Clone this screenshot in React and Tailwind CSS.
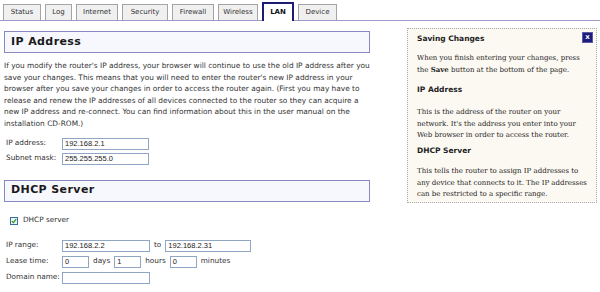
import React from "react";

const sans = { fontFamily: '"DejaVu Sans", Verdana, sans-serif' };
const serif = { fontFamily: '"DejaVu Serif", Georgia, serif' };

function Tab({ label, w, active }) {
  if (active) {
    return (
      <div
        className={`${w} h-[19px] mb-[-1px] bg-white border-2 border-b-0 border-[#1c1c72] flex items-center justify-center text-[7px] font-bold text-[#111]`}
      >
        {label}
      </div>
    );
  }
  return (
    <div
      className={`${w} h-[16px] bg-[#f0f0f0] border border-[#a4a4a4] border-b-0 flex items-center justify-center text-[7px] text-[#333]`}
    >
      {label}
    </div>
  );
}

function Heading({ children }) {
  return (
    <div className="h-[22px] border border-[#8a88c0] bg-[#f7f7fe] flex items-center pl-[6px] text-[11px] font-bold tracking-[0.4px] text-[#1a1a1a]">
      {children}
    </div>
  );
}

function Input({ value, w }) {
  return (
    <div
      className={`${w} h-[12px] border border-[#8fa6c4] bg-white flex items-center pl-[2px] text-[7.5px] text-[#222] leading-none`}
      style={{ fontFamily: '"Liberation Sans", Arial, sans-serif' }}
    >
      {value}
    </div>
  );
}

function Row({ label, children }) {
  return (
    <div className="flex items-center h-[12px] text-[7.3px] text-[#333]">
      <div className="w-[58px] pl-[2px] whitespace-nowrap">{label}</div>
      {children}
    </div>
  );
}

export default function App() {
  return (
    <div className="w-[600px] h-[292px] bg-white overflow-hidden" style={sans}>
      {/* Tabs */}
      <div className="h-[21px] flex items-end gap-[4px] pl-[3px] border-b border-[#9c9ac8]">
        <Tab label="Status" w="w-[38px]" />
        <Tab label="Log" w="w-[27px]" />
        <Tab label="Internet" w="w-[42px]" />
        <Tab label="Security" w="w-[46px]" />
        <Tab label="Firewall" w="w-[42px]" />
        <Tab label="Wireless" w="w-[40px]" />
        <Tab label="LAN" w="w-[32px]" active />
        <Tab label="Device" w="w-[39px]" />
      </div>

      <div className="flex items-start">
        {/* Main */}
        <div className="ml-[4px] w-[366px] pt-[10px]">
          <Heading>IP Address</Heading>
          <p className="mt-[7px] text-[7.4px] leading-[11.6px] text-[#333] whitespace-nowrap">
            If you modify the router's IP address, your browser will continue to use the old IP address after you
            <br />
            save your changes. This means that you will need to enter the router's new IP address in your
            <br />
            browser after you save your changes in order to access the router again. (First you may have to
            <br />
            release and renew the IP addresses of all devices connected to the router so they can acquire a
            <br />
            new IP address and re-connect. You can find information about this in the user manual on the
            <br />
            installation CD-ROM.)
          </p>

          <div className="mt-[8px] flex flex-col gap-[3px]">
            <Row label="IP address:">
              <Input value="192.168.2.1" w="w-[87px]" />
            </Row>
            <Row label="Subnet mask:">
              <Input value="255.255.255.0" w="w-[87px]" />
            </Row>
          </div>

          <div className="mt-[15px]">
            <Heading>DHCP Server</Heading>
          </div>

          <div className="mt-[13px] flex items-center h-[12px] pl-[6px] text-[7.3px] text-[#333]">
            <span className="w-[8px] h-[8px] border border-[#3c6e9c] bg-[#eef4ee] flex items-center justify-center">
              <svg width="6" height="6" viewBox="0 0 6 6">
                <path d="M0.8 3.1 L2.4 4.6 L5.2 1.2" fill="none" stroke="#1f9a2a" strokeWidth="1.3" />
              </svg>
            </span>
            <span className="ml-[5px]">DHCP server</span>
          </div>

          <div className="mt-[13px] flex flex-col gap-[4px]">
            <Row label="IP range:">
              <Input value="192.168.2.2" w="w-[88px]" />
              <span className="ml-[4px] mr-[4px]">to</span>
              <Input value="192.168.2.31" w="w-[86px]" />
            </Row>
            <Row label="Lease time:">
              <Input value="0" w="w-[27px]" />
              <span className="ml-[4px] mr-[4px]">days</span>
              <Input value="1" w="w-[27px]" />
              <span className="ml-[4px] mr-[4px]">hours</span>
              <Input value="0" w="w-[27px]" />
              <span className="ml-[4px]">minutes</span>
            </Row>
            <Row label="Domain name:">
              <Input value="" w="w-[88px]" />
            </Row>
          </div>
        </div>

        {/* Sidebar */}
        <div className="self-start ml-[37px] mt-[7px] w-[190px] border border-dotted border-[#a8a8a8] bg-[#fcf9f2] pl-[9px] pr-[3px] pt-[3px] pb-[1px] text-[#222]">
          <div className="flex items-start justify-between">
            <div className="text-[7.5px] font-bold leading-[11.5px] mt-[1px]">Saving Changes</div>
            <div className="w-[11px] h-[11px] bg-[#1c1c7c] border border-[#5a5aa8] flex items-center justify-center text-white text-[7px] font-bold leading-none">
              x
            </div>
          </div>
          <p className="mt-[8px] text-[7px] leading-[11.5px] whitespace-nowrap" style={serif}>
            When you finish entering your changes, press
            <br />
            the <b>Save</b> button at the bottom of the page.
          </p>
          <div className="mt-[7px] text-[7.5px] font-bold leading-[11.5px]">IP Address</div>
          <p className="mt-[12px] text-[7px] leading-[11.5px] whitespace-nowrap" style={serif}>
            This is the address of the router on your
            <br />
            network. It's the address you enter into your
            <br />
            Web browser in order to access the router.
          </p>
          <div className="mt-[3px] text-[7.5px] font-bold leading-[11.5px]">DHCP Server</div>
          <p className="mt-[10px] text-[7px] leading-[11.5px] whitespace-nowrap" style={serif}>
            This tells the router to assign IP addresses to
            <br />
            any device that connects to it. The IP addresses
            <br />
            can be restricted to a specific range.
          </p>
        </div>
      </div>
    </div>
  );
}
